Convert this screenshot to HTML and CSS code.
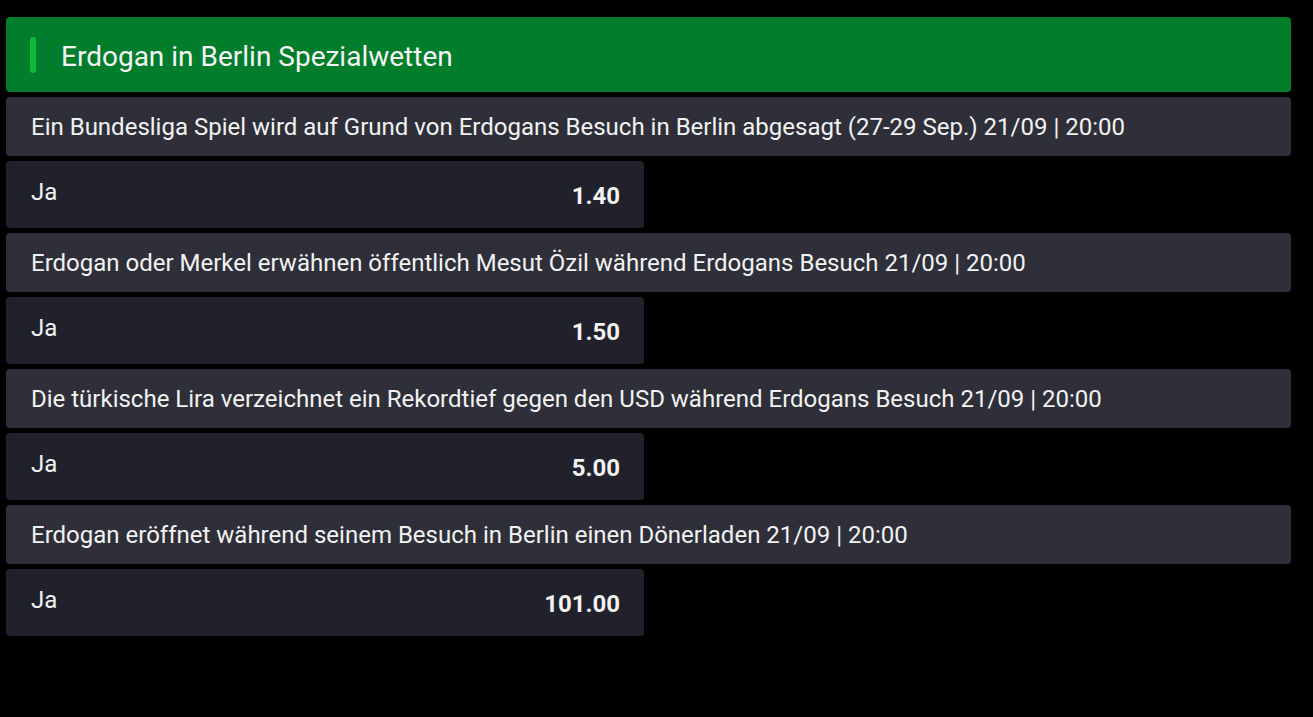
FILE: index.html
```html
<!DOCTYPE html>
<html lang="de">

<head>
    <meta charset="UTF-8">
    <meta name="viewport" content="width=device-width, initial-scale=1.0">
    <title>Spezialwetten</title>
    <link rel="stylesheet" href="styles.css">
</head>

<body>
    <div class="wetten">
        <div class="kopf">
            <span class="balken"></span>
            <h2>Erdogan in Berlin Spezialwetten</h2>
        </div>

        <div class="frage">Ein Bundesliga Spiel wird auf Grund von Erdogans Besuch in Berlin abgesagt (27-29 Sep.) 21/09 | 20:00</div>
        <div class="quote">
            <span class="tipp">Ja</span>
            <span class="wert">1.40</span>
        </div>

        <div class="frage">Erdogan oder Merkel erwähnen öffentlich Mesut Özil während Erdogans Besuch 21/09 | 20:00</div>
        <div class="quote">
            <span class="tipp">Ja</span>
            <span class="wert">1.50</span>
        </div>

        <div class="frage">Die türkische Lira verzeichnet ein Rekordtief gegen den USD während Erdogans Besuch 21/09 | 20:00</div>
        <div class="quote">
            <span class="tipp">Ja</span>
            <span class="wert">5.00</span>
        </div>

        <div class="frage">Erdogan eröffnet während seinem Besuch in Berlin einen Dönerladen 21/09 | 20:00</div>
        <div class="quote">
            <span class="tipp">Ja</span>
            <span class="wert">101.00</span>
        </div>
    </div>
</body>

</html>
```

FILE: styles.css
```css
body {
    background-color: #000;
    font-family: Roboto, "Liberation Sans", Arial, sans-serif;
    color: #f2f2f2;
    margin: 0;
    padding: 17px 0 0 6px;
}

.wetten {
    width: 1285px;
    display: flex;
    flex-direction: column;
    gap: 5px;
}

.kopf {
    background-color: #027d2c;
    height: 75px;
    border-radius: 4px;
    display: flex;
    align-items: center;
    padding-left: 24px;
}

.balken {
    width: 6px;
    height: 36px;
    border-radius: 3px;
    background-color: #0bbb3c;
    margin-right: 25px;
}

h2 {
    margin: 3px 0 0 0;
    font-size: 28px;
    font-weight: 400;
    color: #f4f4f4;
}

.frage {
    background-color: #2e2f38;
    height: 59px;
    border-radius: 4px;
    display: flex;
    align-items: center;
    padding-left: 25px;
    font-size: 24px;
}

.quote {
    background-color: #20212a;
    width: 638px;
    height: 67px;
    border-radius: 4px;
    box-sizing: border-box;
    display: flex;
    align-items: center;
    justify-content: space-between;
    padding: 0 24px 0 25px;
    font-size: 24px;
}

.tipp {
    margin-top: -5px;
}

.wert {
    font-weight: 700;
    margin-top: 3px;
}
```
